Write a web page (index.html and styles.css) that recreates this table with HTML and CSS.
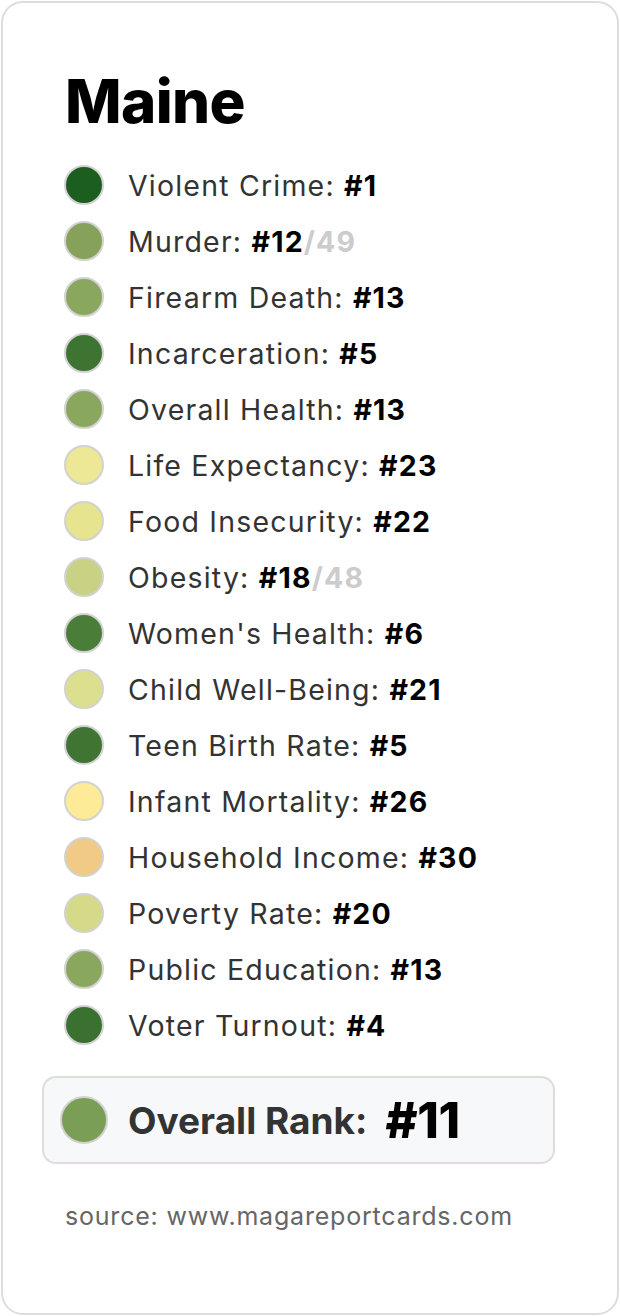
FILE: index.html
```html
<!DOCTYPE html>
<html lang="en">
<head>
<meta charset="utf-8">
<title>Maine</title>
<link rel="stylesheet" href="styles.css">
</head>
<body>
<div class="card">
  <h1 class="title">Maine</h1>
  <ul class="list">
    <li class="row"><span class="dot" style="background:#1c5e20"></span><span class="label">Violent Crime: <b>#1</b></span></li>
    <li class="row"><span class="dot" style="background:#85a15a"></span><span class="label">Murder: <b>#12</b><b class="of">/49</b></span></li>
    <li class="row"><span class="dot" style="background:#8aa75e"></span><span class="label">Firearm Death: <b>#13</b></span></li>
    <li class="row"><span class="dot" style="background:#3e7432"></span><span class="label">Incarceration: <b>#5</b></span></li>
    <li class="row"><span class="dot" style="background:#8aa75e"></span><span class="label">Overall Health: <b>#13</b></span></li>
    <li class="row"><span class="dot" style="background:#ede896"></span><span class="label">Life Expectancy: <b>#23</b></span></li>
    <li class="row"><span class="dot" style="background:#e6e48e"></span><span class="label">Food Insecurity: <b>#22</b></span></li>
    <li class="row"><span class="dot" style="background:#c9d184"></span><span class="label">Obesity: <b>#18</b><b class="of">/48</b></span></li>
    <li class="row"><span class="dot" style="background:#4a7d38"></span><span class="label">Women's Health: <b>#6</b></span></li>
    <li class="row"><span class="dot" style="background:#dce08e"></span><span class="label">Child Well-Being: <b>#21</b></span></li>
    <li class="row"><span class="dot" style="background:#3f7432"></span><span class="label">Teen Birth Rate: <b>#5</b></span></li>
    <li class="row"><span class="dot" style="background:#fdeb97"></span><span class="label">Infant Mortality: <b>#26</b></span></li>
    <li class="row"><span class="dot" style="background:#f1ca85"></span><span class="label">Household Income: <b>#30</b></span></li>
    <li class="row"><span class="dot" style="background:#d5da88"></span><span class="label">Poverty Rate: <b>#20</b></span></li>
    <li class="row"><span class="dot" style="background:#8aa75e"></span><span class="label">Public Education: <b>#13</b></span></li>
    <li class="row"><span class="dot" style="background:#3a7030"></span><span class="label">Voter Turnout: <b>#4</b></span></li>
  </ul>
  <div class="overall">
    <span class="dot big" style="background:#7a9e55"></span>
    <span class="overall-label">Overall Rank:</span>
    <span class="overall-value">#11</span>
  </div>
  <p class="source">source: www.magareportcards.com</p>
</div>
</body>
</html>
```

FILE: styles.css
```css
* { box-sizing: border-box; }
html, body { margin: 0; padding: 0; background: #ffffff; }
body {
  padding: 1px;
  font-family: Inter, "Liberation Sans", Arial, sans-serif;
  color: #333333;
}
.card {
  height: 1314px;
  border: 2px solid #dddddd;
  border-radius: 22px;
  background: #ffffff;
  padding: 61px 62px 0 39px;
}
.title {
  margin: 0 0 19px 23px;
  font-size: 60px;
  font-weight: 800;
  line-height: 74px;
  color: #000000;
  letter-spacing: -0.6px;
}
.list {
  list-style: none;
  margin: 0 0 23px 22px;
  padding: 0;
}
.row {
  display: flex;
  align-items: center;
  gap: 24px;
  height: 56px;
}
.dot {
  flex: none;
  width: 40px;
  height: 40px;
  border-radius: 50%;
  border: 2px solid #d2d2d2;
}
.label {
  font-size: 28.5px;
  color: #333333;
  letter-spacing: 1.2px;
}
.label b { color: #000000; font-weight: 700; }
.label b.of { color: #cccccc; }
.overall {
  display: flex;
  align-items: center;
  height: 88px;
  width: 513px;
  padding-left: 16px;
  background: #f7f8fa;
  border: 2px solid #dddddd;
  border-radius: 14px;
}
.dot.big { width: 48px; height: 48px; margin-right: 20px; }
.overall-label {
  font-size: 37px;
  font-weight: 700;
  color: #333333;
  margin-right: 18px;
}
.overall-value {
  font-size: 49px;
  font-weight: 800;
  color: #000000;
  letter-spacing: -0.3px;
}
.source {
  margin: 37px 0 0 23px;
  font-size: 25px;
  color: #666666;
  letter-spacing: 0.8px;
}
```
